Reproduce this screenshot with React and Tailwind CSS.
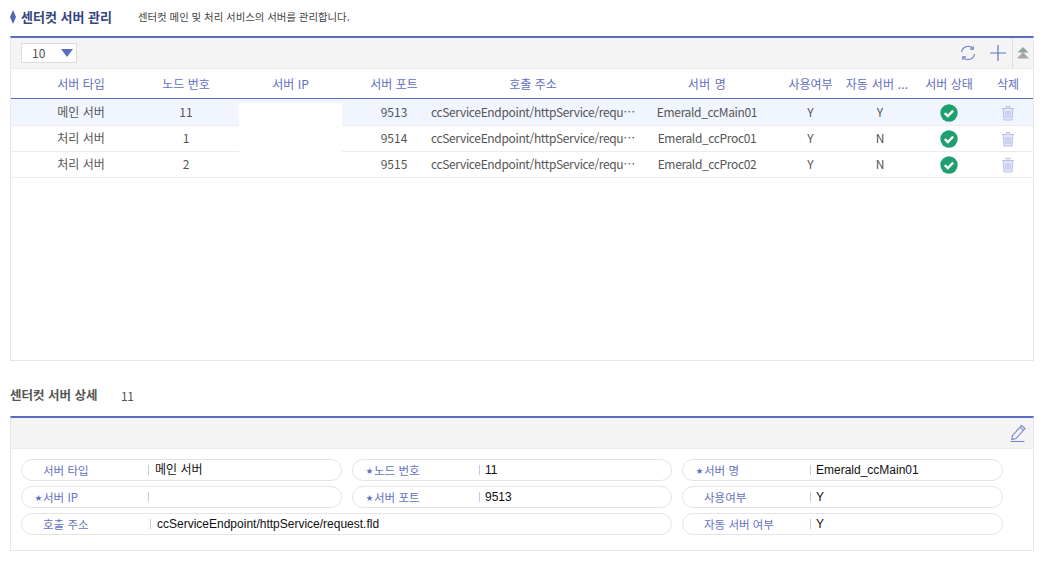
import React from "react";

const rows = [
  { type: "메인 서버", node: "11", port: "9513", name: "Emerald_ccMain01", use: "Y", auto: "Y", active: true },
  { type: "처리 서버", node: "1", port: "9514", name: "Emerald_ccProc01", use: "Y", auto: "N" },
  { type: "처리 서버", node: "2", port: "9515", name: "Emerald_ccProc02", use: "Y", auto: "N" },
];

const cols = "grid grid-cols-[18px_104px_106px_103px_86px_210px_138px_69px_70px_68px_50px]";

function CheckIcon() {
  return (
    <svg width="18" height="18" viewBox="0 0 18 18">
      <circle cx="9" cy="9" r="8.7" fill="#1f9f6e" />
      <path d="M4.8 9.2l3 2.9 5.4-5.4" fill="none" stroke="#fff" strokeWidth="2.4" />
    </svg>
  );
}

function TrashIcon() {
  return (
    <svg width="14" height="16" viewBox="0 0 14 16" fill="none" stroke="#b6bfe8" strokeWidth="1">
      <path d="M1 3.5h12M5 3.5V1.5h4v2" />
      <path d="M2.2 3.5l.8 11.5h8l.8-11.5z" fill="#e4e8f8" />
      <path d="M5 6v7M7 6v7M9 6v7" />
    </svg>
  );
}

function RefreshIcon() {
  return (
    <svg width="16" height="16" viewBox="0 0 16 16" fill="none" stroke="#6a7ccb" strokeWidth="1.1">
      <path d="M1.6 7A6.4 6.4 0 0 1 12.8 3.6" />
      <path d="M14.4 9A6.4 6.4 0 0 1 3.2 12.4" />
      <path d="M13.2 1V4.1H10.1" />
      <path d="M2.8 15V11.9H5.9" />
    </svg>
  );
}

function PlusIcon() {
  return (
    <svg width="16" height="16" viewBox="0 0 16 16" stroke="#5f72c8" strokeWidth="1.2">
      <path d="M8 0v16M0 8h16" />
    </svg>
  );
}

function CollapseIcon() {
  return (
    <svg width="12" height="12" viewBox="0 0 12 12">
      <path d="M6 0l5.5 5.5H.5z" fill="#8fa59c" />
      <path d="M6 5l6 6.5H0z" fill="#aaa79c" />
    </svg>
  );
}

function PencilIcon() {
  return (
    <svg width="17" height="18" viewBox="0 0 17 18" fill="none" stroke="#7686cf" strokeWidth="1.1">
      <path d="M2.5 11.5L11.5 1.5l3.5 3-9 10-4.2 1z" />
      <path d="M10 3.2l3.5 3" />
      <path d="M0.5 17.5h14" />
    </svg>
  );
}

function Field({ label, value, required, wide, labelWidth, gap = "mr-[5px]" }) {
  return (
    <div
      className={`h-[22px] rounded-full border border-[#e4e4e4] flex items-center ${wide ? "col-span-2" : ""}`}
    >
      <div className={`relative shrink-0 h-full flex items-center pl-[21px] pt-[2px] text-[11.5px] text-[#6472c2] ${labelWidth}`}>
        {required && <span className="absolute left-[13px] top-[5px] text-[7px] text-[#5f6fc0]">★</span>}
        {label}
      </div>
      <div className={`w-px h-[10px] bg-[#c5cbe6] ${gap}`} />
      <div className="font-['Liberation_Sans','Noto_Sans_CJK_KR',sans-serif] text-[12px] text-[#111]">{value}</div>
    </div>
  );
}

export default function App() {
  return (
    <div lang="ko" className="w-[1044px] h-[567px] bg-white px-[10px] overflow-hidden font-['Noto_Sans_CJK_KR','Noto_Sans',sans-serif]">
      <div className="h-[36px] flex items-start pt-[7px]">
        <svg className="mt-[3px] mr-[5px]" width="6" height="14" viewBox="0 0 6 14">
          <path d="M3 0l3 7-3 7-3-7z" fill="#5366b8" />
        </svg>
        <div className="text-[13px] leading-[20px] font-bold text-[#34467f] w-[117px]">센터컷 서버 관리</div>
        <div className="text-[10.4px] leading-[20px] text-[#444]">센터컷 메인 및 처리 서비스의 서버를 관리합니다.</div>
      </div>

      <div className="relative h-[325px] border-t-2 border-t-[#5b6cc2] border-x border-b border-x-[#e6e6e6] border-b-[#e6e6e6]">
        <div className="h-[31px] bg-[#f4f4f4] border-b border-[#ececec] flex items-center pl-[10px]">
          <div className="w-[56px] h-[20px] bg-white border border-[#dddddd] flex items-center justify-between pl-[10px] pr-[3px] text-[12px] text-[#555]">
            <span>10</span>
            <svg width="12" height="8" viewBox="0 0 12 8">
              <path d="M0 0h12L6 8z" fill="#5b6cc2" />
            </svg>
          </div>
          <div className="ml-auto flex items-center h-full">
            <RefreshIcon />
            <div className="ml-[14px] mr-[6px]">
              <PlusIcon />
            </div>
            <div className="w-[21px] h-full border-l border-[#dddddd] flex items-center justify-center">
              <CollapseIcon />
            </div>
          </div>
        </div>

        <div className={`${cols} h-[30px] items-center border-b border-[#5b6cc2] text-[12px] text-[#5f6fc0] text-center`}>
          <div />
          <div>서버 타입</div>
          <div>노드 번호</div>
          <div>서버 IP</div>
          <div className="pl-[18px]">서버 포트</div>
          <div>호출 주소</div>
          <div className="tracking-[0.5px]">서버 명</div>
          <div>사용여부</div>
          <div className="pr-[6px] tracking-[0.2px] whitespace-nowrap">자동 서버 ...</div>
          <div>서버 상태</div>
          <div>삭제</div>
        </div>

        {rows.map((r) => (
          <div
            key={r.port}
            className={`${cols} ${r.active ? "h-[27px] bg-[#f0f5ff]" : "h-[26px] pb-[2px]"} items-center border-b border-[#ececec] text-[12px] text-[#555] text-center`}
          >
            <div />
            <div>{r.type}</div>
            <div>{r.node}</div>
            <div />
            <div className="pl-[18px]">{r.port}</div>
            <div className="truncate text-left pl-[3px] pr-[1px] tracking-[-0.35px]">ccServiceEndpoint/httpService/request.fld</div>
            <div className="tracking-[-0.35px]">{r.name}</div>
            <div>{r.use}</div>
            <div>{r.auto}</div>
            <div className="flex justify-center translate-y-[1px]">
              <CheckIcon />
            </div>
            <div className="flex justify-center translate-y-[1px]">
              <TrashIcon />
            </div>
          </div>
        ))}

        {/* 서버 IP 가림 */}
        <div className="absolute left-[228px] top-[65px] w-[103px] h-[49px] bg-white" />
      </div>

      <div className="h-[55px] flex items-center pt-[14px]">
        <div className="text-[12.5px] font-bold text-[#555] w-[111px]">센터컷 서버 상세</div>
        <div className="text-[12px] text-[#555] tracking-[-0.5px]">11</div>
      </div>

      <div className="h-[135px] border-t-2 border-t-[#5b6cc2] border-x border-b border-x-[#e6e6e6] border-b-[#e6e6e6]">
        <div className="h-[31px] bg-[#f4f4f4] border-b border-[#ececec] flex items-center justify-end pr-[6px]">
          <PencilIcon />
        </div>
        <div className="grid grid-cols-[321px_320px_321px] gap-x-[10px] gap-y-[5px] pl-[10px] pt-[10px]">
          <Field label="서버 타입" value="메인 서버" labelWidth="w-[126px]" gap="mr-[6px]" />
          <Field label="노드 번호" value="11" required labelWidth="w-[126px]" />
          <Field label="서버 명" value="Emerald_ccMain01" required labelWidth="w-[127px]" />
          <Field label="서버 IP" value="" required labelWidth="w-[126px]" gap="mr-[6px]" />
          <Field label="서버 포트" value="9513" required labelWidth="w-[126px]" />
          <Field label="사용여부" value="Y" labelWidth="w-[127px]" />
          <Field label="호출 주소" value="ccServiceEndpoint/httpService/request.fld" wide labelWidth="w-[128px]" gap="mr-[6px]" />
          <Field label="자동 서버 여부" value="Y" labelWidth="w-[127px]" />
        </div>
      </div>
    </div>
  );
}
